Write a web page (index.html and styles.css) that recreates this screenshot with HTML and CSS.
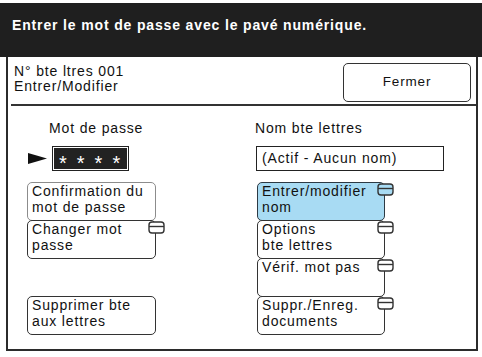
FILE: index.html
```html
<!DOCTYPE html>
<html lang="fr">
<head>
<meta charset="utf-8">
<title>Entrer le mot de passe</title>
<link rel="stylesheet" href="styles.css">
</head>
<body>
<div class="header">Entrer le mot de passe avec le pavé numérique.</div>
<div class="panel">
  <div class="info">
    <div class="info-text">N° bte ltres 001<br>Entrer/Modifier</div>
    <div class="close-btn">Fermer</div>
  </div>
  <div class="sep"></div>
  <div class="main">
    <div class="heading left-head">Mot de passe</div>
    <div class="heading right-head">Nom bte lettres</div>

    <div class="pw-row">
      <svg class="arrow" width="19" height="11" viewBox="0 0 19 11"><polygon points="0,0 19,5.5 0,11" fill="#111"/></svg>
      <div class="pw-box"><span>*</span><span>*</span><span>*</span><span>*</span></div>
    </div>
    <div class="name-box">(Actif - Aucun nom)</div>

    <div class="btn light c1 r3">Confirmation du<br>mot de passe</div>
    <div class="btn c1 r4">Changer mot<br>passe<svg class="tab" width="17" height="13" viewBox="0 0 17 13"><rect x="1" y="1" width="15" height="11" rx="3"/><line x1="1" y1="5.5" x2="16" y2="5.5"/></svg></div>
    <div class="btn c1 r6">Supprimer bte<br>aux lettres</div>

    <div class="btn active c2 r3">Entrer/modifier<br>nom<svg class="tab" width="17" height="13" viewBox="0 0 17 13"><rect x="1" y="1" width="15" height="11" rx="3"/><line x1="1" y1="5.5" x2="16" y2="5.5"/></svg></div>
    <div class="btn c2 r4">Options<br>bte lettres<svg class="tab" width="17" height="13" viewBox="0 0 17 13"><rect x="1" y="1" width="15" height="11" rx="3"/><line x1="1" y1="5.5" x2="16" y2="5.5"/></svg></div>
    <div class="btn c2 r5">Vérif. mot pas<svg class="tab" width="17" height="13" viewBox="0 0 17 13"><rect x="1" y="1" width="15" height="11" rx="3"/><line x1="1" y1="5.5" x2="16" y2="5.5"/></svg></div>
    <div class="btn c2 r6">Suppr./Enreg.<br>documents<svg class="tab" width="17" height="13" viewBox="0 0 17 13"><rect x="1" y="1" width="15" height="11" rx="3"/><line x1="1" y1="5.5" x2="16" y2="5.5"/></svg></div>
  </div>
</div>
</body>
</html>
```

FILE: styles.css
```css
* { box-sizing: border-box; }

html, body {
  margin: 0;
  background: #fff;
}

body {
  width: 482px;
  height: 357px;
  padding-top: 3px;
  font-family: "Liberation Sans", Arial, sans-serif;
  font-size: 14px;
  letter-spacing: 0.85px;
  color: #111;
  overflow: hidden;
}

.header {
  height: 54px;
  background: #1f1f1f;
  color: #fff;
  font-weight: bold;
  line-height: 16px;
  padding: 14px 0 0 12px;
  letter-spacing: 0.85px;
}

.panel {
  margin-left: 6px;
  width: 472px;
  height: 294px;
  border-left: 2px solid #2b2b2b;
  border-right: 2px solid #2b2b2b;
  border-bottom: 2px solid #2b2b2b;
}

.info {
  height: 47px;
  display: flex;
  justify-content: space-between;
  align-items: flex-start;
}

.info-text {
  padding: 7px 0 0 6px;
  line-height: 15px;
}

.close-btn {
  margin: 6px 5px 0 0;
  width: 128px;
  height: 39px;
  border: 1.5px solid #333;
  border-radius: 5px;
  display: flex;
  align-items: center;
  justify-content: center;
  font-size: 13.5px;
  padding-bottom: 2px;
}

.sep {
  margin-left: 3px;
  height: 2px;
  background: #333;
}

.main {
  padding: 14px 0 0 19px;
  display: grid;
  grid-template-columns: 229px 129px;
  grid-template-rows: auto auto 38px 38px 38px 38px;
  line-height: 16px;
}

.heading { grid-row: 1; }
.left-head { grid-column: 1; padding-left: 22px; }
.right-head { grid-column: 2; margin-left: -1px; white-space: nowrap; }

.pw-row {
  grid-row: 2;
  grid-column: 1;
  margin-top: 10px;
  display: flex;
  align-items: center;
  gap: 5px;
  padding-left: 1px;
  height: 25px;
}

.arrow { display: block; }

.pw-box {
  width: 77px;
  height: 25px;
  background: #222;
  border: 1px solid #222;
  box-shadow: inset 0 0 0 1px #fff;
  color: #fff;
  font-size: 20px;
  line-height: 20px;
  letter-spacing: 0;
  padding: 6px 0 0 6px;
  display: flex;
  gap: 10px;
}

.name-box {
  grid-row: 2;
  grid-column: 2;
  margin-top: 10px;
  width: 188px;
  height: 25px;
  border: 1.5px solid #222;
  padding: 3px 0 0 5px;
  white-space: nowrap;
}

.btn {
  position: relative;
  height: 39px;
  width: 129px;
  border: 1.5px solid #333;
  border-radius: 5px;
  padding: 0 4px;
  background: #fff;
  white-space: nowrap;
}

.btn.light { border-color: #8c8c8c; }
.btn.active { background: #a8dbf3; border-color: #2d3a44; }

.c1 { grid-column: 1; }
.c2 { grid-column: 2; margin-left: 1px; width: 128px; }
.r3 { grid-row: 3; margin-top: 11px; }
.r4 { grid-row: 4; margin-top: 11px; }
.r5 { grid-row: 5; margin-top: 11px; }
.r6 { grid-row: 6; margin-top: 11px; }

.tab {
  position: absolute;
  top: 0;
  right: -9.5px;
  display: block;
}

.tab rect { fill: #fff; stroke: #333; stroke-width: 1.4; }
.tab line { stroke: #333; stroke-width: 1.4; }
.btn.active .tab rect { fill: #a8dbf3; }
```
